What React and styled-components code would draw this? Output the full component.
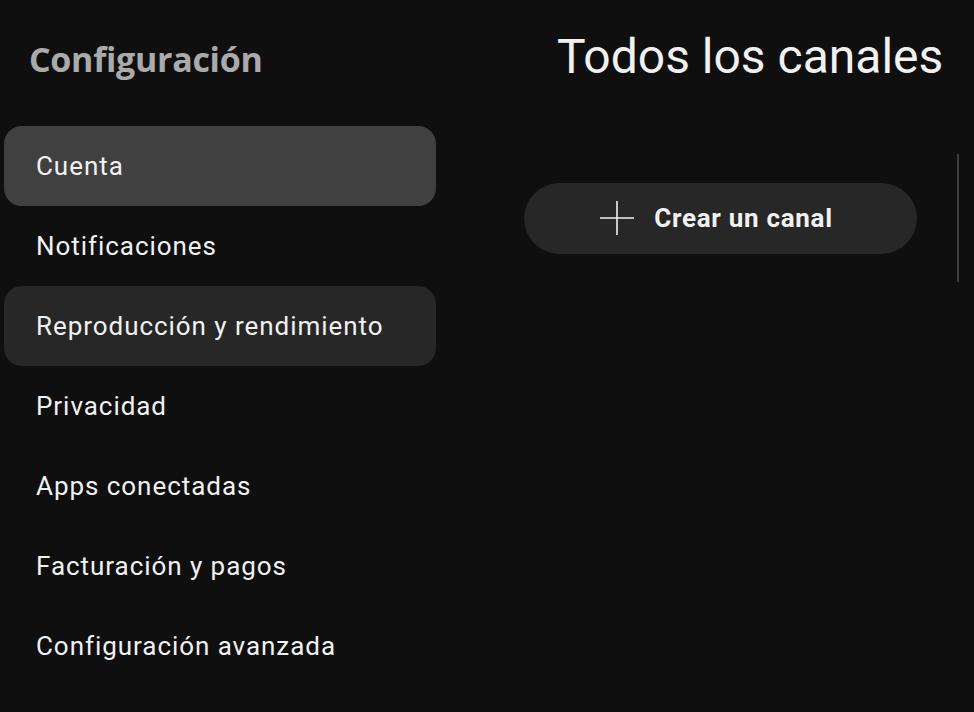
import React from "react";
import styled, { createGlobalStyle } from "styled-components";

const Global = createGlobalStyle`
  html, body { margin: 0; padding: 0; background: #0f0f0f; }
  body { font-family: Roboto, "Noto Sans", sans-serif; color: #f1f1f1; }
  * { box-sizing: border-box; }
`;

const Page = styled.div`
  width: 974px;
  height: 712px;
  overflow: hidden;
  display: flex;
  background: #0f0f0f;
`;

const Sidebar = styled.nav`
  width: 432px;
  margin-left: 4px;
  display: flex;
  flex-direction: column;
`;

const SideTitle = styled.h1`
  margin: 0;
  height: 126px;
  padding: 37px 0 0 25px;
  font-family: "Open Sans", "Noto Sans", sans-serif;
  font-weight: 700;
  font-size: 34px;
  letter-spacing: -0.3px;
  line-height: 44px;
  color: #aaaaaa;
`;

const NavItem = styled.div`
  height: 80px;
  display: flex;
  align-items: center;
  padding-left: 32px;
  border-radius: 18px;
  font-size: 26px;
  font-weight: 400;
  letter-spacing: 0.95px;
  color: #f1f1f1;
  background: ${(p) => (p.$state === "active" ? "#404040" : p.$state === "hover" ? "#272727" : "transparent")};
`;

const Main = styled.main`
  flex: 1;
  margin-left: 88px;
  display: flex;
  flex-direction: column;
`;

const MainTitle = styled.h2`
  margin: 0;
  height: 154px;
  padding: 25px 0 0 33px;
  font-size: 48px;
  font-weight: 400;
  line-height: 64px;
  color: #f1f1f1;
`;

const Row = styled.div`
  display: flex;
  align-items: center;
  gap: 40px;
`;

const CreateButton = styled.button`
  width: 393px;
  height: 71px;
  border: none;
  border-radius: 36px;
  background: #272727;
  color: #f1f1f1;
  display: flex;
  align-items: center;
  justify-content: center;
  gap: 20px;
  padding: 0 8px 0 0;
  font-family: Roboto, sans-serif;
  font-size: 26px;
  font-weight: 700;
  letter-spacing: 0.7px;
  cursor: pointer;
`;

const Divider = styled.div`
  width: 2px;
  height: 128px;
  background: #3d3d3d;
`;

const PlusIcon = () => (
  <svg width="34" height="34" viewBox="0 0 34 34" aria-hidden="true">
    <path d="M17 0v34M0 17h34" stroke="#f1f1f1" strokeWidth="1.6" fill="none" />
  </svg>
);

const items = [
  { label: "Cuenta", state: "active" },
  { label: "Notificaciones" },
  { label: "Reproducción y rendimiento", state: "hover" },
  { label: "Privacidad" },
  { label: "Apps conectadas" },
  { label: "Facturación y pagos" },
  { label: "Configuración avanzada" },
];

export default function App() {
  return (
    <>
      <Global />
      <Page>
        <Sidebar>
          <SideTitle>Configuración</SideTitle>
          {items.map((it) => (
            <NavItem key={it.label} $state={it.state}>
              {it.label}
            </NavItem>
          ))}
        </Sidebar>
        <Main>
          <MainTitle>Todos los canales</MainTitle>
          <Row>
            <CreateButton>
              <PlusIcon />
              Crear un canal
            </CreateButton>
            <Divider />
          </Row>
        </Main>
      </Page>
    </>
  );
}
